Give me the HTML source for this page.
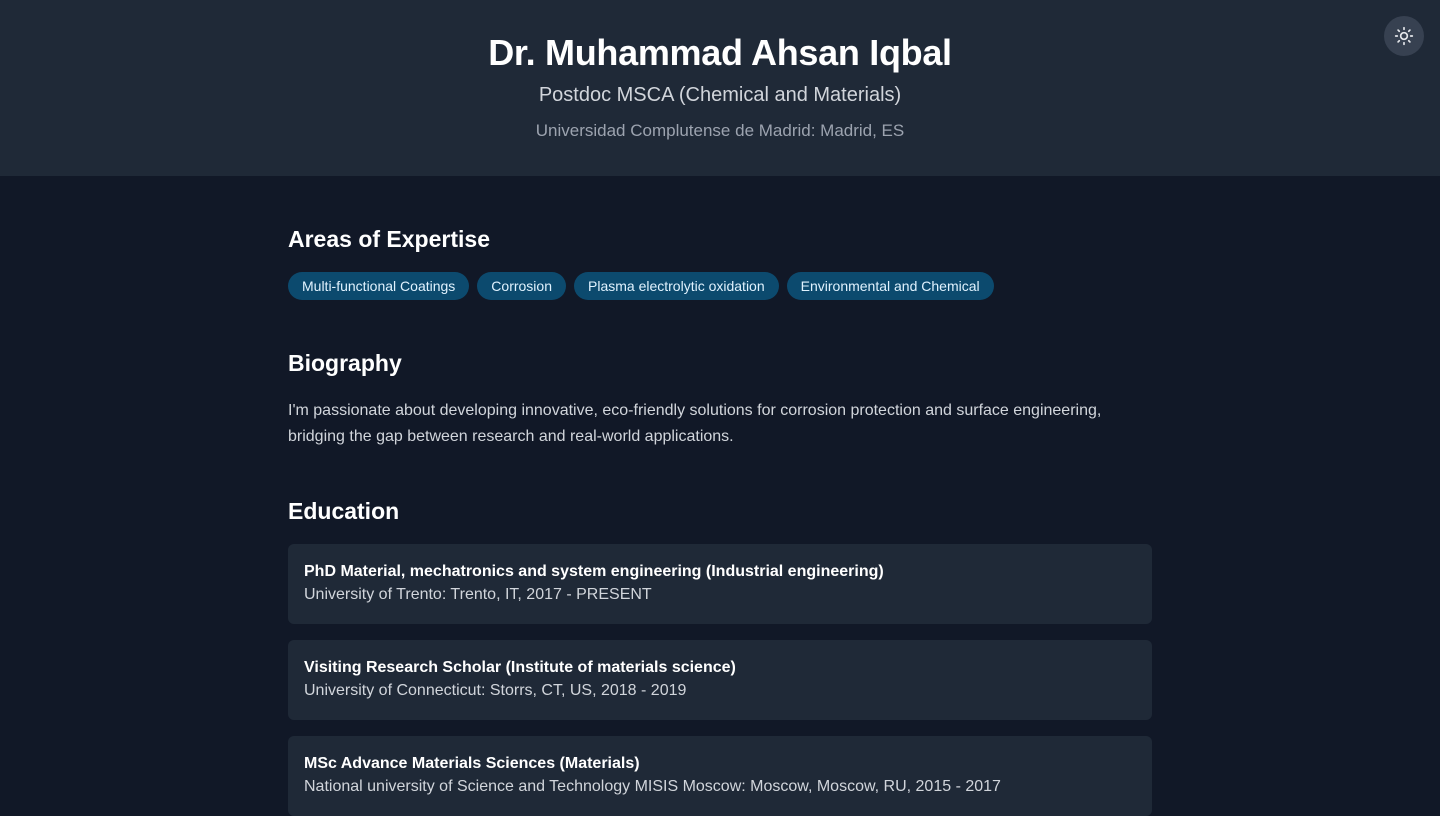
<!DOCTYPE html>
<html><head><meta charset="utf-8"><style>
*{margin:0;padding:0;box-sizing:border-box}
body{width:1440px;height:815px;overflow:hidden;background:#111827;font-family:"Liberation Sans",sans-serif;color:#fff}
header{height:176px;background:#1f2937;text-align:center;position:relative}
h1{position:absolute;top:32px;width:100%;font-size:36px;font-weight:700;letter-spacing:-0.3px}
.sub{position:absolute;top:84px;width:100%;font-size:20px;color:#d1d5db}
.loc{position:absolute;top:121px;width:100%;font-size:17px;color:#9ca3af}
.btn{position:absolute;left:1384px;top:16px;width:40px;height:40px;border-radius:50%;background:#374151;display:flex;align-items:center;justify-content:center}
main{position:absolute;left:288px;top:176px;width:864px}
h2{position:absolute;font-size:23px;font-weight:700}
.tags{position:absolute;top:96px;display:flex;gap:8px}
.tag{background:#0c4a6e;color:#e0f2fe;font-size:14px;height:28px;line-height:28px;padding:0 14px;border-radius:14px}
.bio{position:absolute;top:222px;font-size:16px;line-height:26px;color:#d1d5db;width:864px}
.card{position:absolute;left:0;width:864px;height:80px;background:#1f2937;border-radius:6px;padding:19px 16px}
.card b{display:block;font-size:16px;margin-bottom:5px}
.card span{font-size:16px;color:#d1d5db}
</style></head><body>
<header>
<h1>Dr. Muhammad Ahsan Iqbal</h1>
<div class="sub">Postdoc MSCA (Chemical and Materials)</div>
<div class="loc">Universidad Complutense de Madrid: Madrid, ES</div>
<div class="btn"><svg width="20" height="20" viewBox="0 0 24 24" fill="none" stroke="#e5e7eb" stroke-width="2" stroke-linecap="round"><circle cx="12" cy="12" r="4"/><path d="M12 2v2M12 20v2M4.9 4.9l1.4 1.4M17.7 17.7l1.4 1.4M2 12h2M20 12h2M4.9 19.1l1.4-1.4M17.7 6.3l1.4-1.4"/></svg></div>
</header>
<main>
<h2 style="top:50px">Areas of Expertise</h2>
<div class="tags"><div class="tag">Multi-functional Coatings</div><div class="tag">Corrosion</div><div class="tag">Plasma electrolytic oxidation</div><div class="tag">Environmental and Chemical</div></div>
<h2 style="top:174px">Biography</h2>
<div class="bio">I'm passionate about developing innovative, eco-friendly solutions for corrosion protection and surface engineering, bridging the gap between research and real-world applications.</div>
<h2 style="top:322px">Education</h2>
<div class="card" style="top:368px"><b>PhD Material, mechatronics and system engineering (Industrial engineering)</b><span>University of Trento: Trento, IT, 2017 - PRESENT</span></div>
<div class="card" style="top:464px"><b>Visiting Research Scholar (Institute of materials science)</b><span>University of Connecticut: Storrs, CT, US, 2018 - 2019</span></div>
<div class="card" style="top:560px"><b>MSc Advance Materials Sciences (Materials)</b><span>National university of Science and Technology MISIS Moscow: Moscow, Moscow, RU, 2015 - 2017</span></div>
</main>
</body></html>
